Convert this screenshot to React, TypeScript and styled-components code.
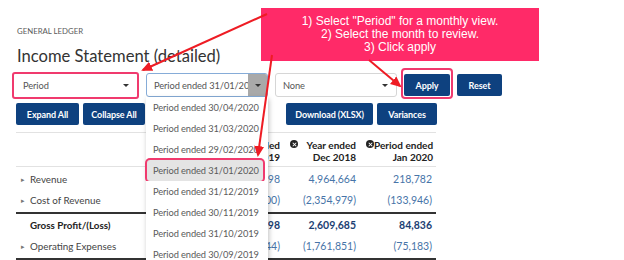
import styled, { createGlobalStyle } from 'styled-components'

const GlobalStyle = createGlobalStyle`
  * { box-sizing: border-box; }
  body {
    margin: 0;
    background: #fff;
    font-family: Lato, "Noto Sans", sans-serif;
  }
`

const periods = [
  '30/04/2020',
  '31/03/2020',
  '29/02/2020',
  '31/01/2020',
  '31/12/2019',
  '30/11/2019',
  '31/10/2019',
  '30/09/2019',
]

const rows = [
  { label: 'Revenue', values: ['5,214,798', '4,964,664', '218,782'], expandable: true },
  { label: 'Cost of Revenue', values: ['(2,490,000)', '(2,354,979)', '(133,946)'], expandable: true, closing: true },
  { label: 'Gross Profit/(Loss)', values: ['2,724,798', '2,609,685', '84,836'], total: true },
  { label: 'Operating Expenses', values: ['(1,893,344)', '(1,761,851)', '(75,183)'], expandable: true, closing: true },
]

const App = () => {
  return (
    <Page>
      <GlobalStyle />
      <Eyebrow>GENERAL LEDGER</Eyebrow>
      <Title>Income Statement (detailed)</Title>

      <FilterRow>
        <Select $highlight>
          <span>Period</span>
          <Caret />
        </Select>
        <Select $focused>
          <span>Period ended 31/01/2020</span>
          <CaretBox>
            <Caret />
          </CaretBox>
        </Select>
        <Select>
          <span>None</span>
          <Caret />
        </Select>
        <Button $w={46} $highlight>Apply</Button>
        <Button $w={45}>Reset</Button>
      </FilterRow>

      <ActionRow>
        <Button $w={63}>Expand All</Button>
        <Button $w={62}>Collapse All</Button>
        <Spacer />
        <Button $w={87}>Download (XLSX)</Button>
        <Button $w={60}>Variances</Button>
      </ActionRow>

      <Table>
        <HeaderRow>
          <div />
          <HeadCell>
            <CloseIcon />
            <span>Year ended<br />Dec 2019</span>
          </HeadCell>
          <HeadCell>
            <CloseIcon />
            <span>Year ended<br />Dec 2018</span>
          </HeadCell>
          <HeadCell>
            <CloseIcon />
            <span>Period ended<br />Jan 2020</span>
          </HeadCell>
        </HeaderRow>
        {rows.map((row) => (
          <Row key={row.label} $closing={row.closing}>
            <Label $total={row.total}>
              <Toggle>{row.expandable ? '▸' : ''}</Toggle>
              {row.label}
            </Label>
            {row.values.map((v, i) => (
              <Value key={i} $total={row.total}>{v}</Value>
            ))}
          </Row>
        ))}
      </Table>

      <Menu>
        {periods.map((p) => (
          <MenuItem key={p} $active={p === '31/01/2020'}>
            Period ended {p}
          </MenuItem>
        ))}
      </Menu>

      <Callout>
        1) Select "Period" for a monthly view.<br />
        2) Select the month to review.<br />
        3) Click apply
      </Callout>

      <Arrows width="624" height="260" viewBox="0 0 624 260">
        <defs>
          <marker id="head" markerWidth="11" markerHeight="10" refX="9" refY="5" orient="auto" markerUnits="userSpaceOnUse">
            <path d="M0,0 L11,5 L0,10 z" fill="#ee1c24" />
          </marker>
        </defs>
        <line x1="267" y1="14" x2="143" y2="70" stroke="#ee1c24" strokeWidth="2" markerEnd="url(#head)" />
        <line x1="272" y1="55" x2="258" y2="155" stroke="#ee1c24" strokeWidth="2" markerEnd="url(#head)" />
        <line x1="369" y1="60" x2="400" y2="86" stroke="#ee1c24" strokeWidth="2" markerEnd="url(#head)" />
      </Arrows>
    </Page>
  )
}

const Page = styled.div`
  position: relative;
  width: 624px;
  height: 260px;
  overflow: hidden;
  padding: 26px 16px 0;
`

const Eyebrow = styled.div`
  height: 10px;
  font-size: 7.8px;
  line-height: 10px;
  color: #5a5a5a;
  padding-left: 1px;
`

const Title = styled.h1`
  margin: 10px 0 0 1px;
  height: 20px;
  font-size: 16.6px;
  line-height: 20px;
  font-weight: 400;
  color: #333;
`

const FilterRow = styled.div`
  display: flex;
  align-items: center;
  gap: 7px;
  margin-top: 7px;
`

const Select = styled.div<{ $highlight?: boolean; $focused?: boolean }>`
  position: relative;
  flex: none;
  display: flex;
  align-items: center;
  justify-content: space-between;
  width: ${(p) => (p.$highlight ? '127px' : '122px')};
  height: ${(p) => (p.$highlight ? '27px' : '24px')};
  margin: ${(p) => (p.$highlight ? '-1px 0 -2px -4px' : '0')};
  padding: 0 0 0 ${(p) => (p.$highlight ? '9px' : '7px')};
  background: #fff;
  border: ${(p) => (p.$highlight ? '2px solid #f03a6e' : p.$focused ? '1px solid #86acd8' : '1px solid #d6d6d6')};
  border-radius: 3px;
  font-size: 9.3px;
  letter-spacing: -0.1px;
  color: #555;
  white-space: nowrap;
  overflow: hidden;
  & > span {
    overflow: hidden;
  }
`

const Caret = styled.i`
  flex: none;
  width: 0;
  height: 0;
  margin: 0 8px;
  border-left: 3px solid transparent;
  border-right: 3px solid transparent;
  border-top: 3px solid #333;
`

const CaretBox = styled.div`
  flex: none;
  display: flex;
  align-items: center;
  justify-content: center;
  width: 19px;
  height: 100%;
  background: #a9a9a9;
  & > i {
    margin: 0;
  }
`

const Button = styled.button<{ $w: number; $highlight?: boolean }>`
  position: relative;
  flex: none;
  width: ${(p) => p.$w}px;
  height: 22px;
  padding: 0;
  background: #0e417f;
  color: #fff;
  border: none;
  border-radius: 2px;
  font-family: Lato, sans-serif;
  font-size: 9px;
  letter-spacing: -0.1px;
  font-weight: 700;
  &::after {
    content: '';
    display: ${(p) => (p.$highlight ? 'block' : 'none')};
    position: absolute;
    left: -3px;
    right: -3px;
    top: -6px;
    bottom: -3px;
    border: 2px solid #f03a6e;
    border-radius: 4px;
  }
`

const ActionRow = styled.div`
  display: flex;
  gap: 4px;
  margin-top: 6px;
`

const Spacer = styled.div`
  width: 133px;
`

const Table = styled.div`
  width: 420px;
  margin-top: 7px;
  border-top: 1px solid #e2e2e2;
`

const grid = `
  display: grid;
  grid-template-columns: 188px 76px 76px 76px;
`

const HeaderRow = styled.div`
  ${grid}
  height: 34px;
  padding-top: 6px;
  border-bottom: 1px solid #e2e2e2;
`

const HeadCell = styled.div`
  display: flex;
  justify-content: space-between;
  align-items: flex-start;
  padding-left: 10px;
  font-size: 10px;
  font-weight: 700;
  color: #222;
  line-height: 12px;
  text-align: right;
  white-space: nowrap;
`

const CloseIcon = styled.span`
  position: relative;
  flex: none;
  width: 8px;
  height: 8px;
  border-radius: 50%;
  background: #222;
  margin-top: 1px;
  &::before,
  &::after {
    content: '';
    position: absolute;
    left: 1.5px;
    top: 3.5px;
    width: 5px;
    height: 1px;
    background: #fff;
    transform: rotate(45deg);
  }
  &::after {
    transform: rotate(-45deg);
  }
`

const Row = styled.div<{ $closing?: boolean }>`
  ${grid}
  height: ${(p) => (p.$closing ? '24px' : '22px')};
  padding-bottom: ${(p) => (p.$closing ? '2px' : '0')};
  align-items: center;
  border-bottom: ${(p) => (p.$closing ? '2px solid #333' : 'none')};
  &:nth-of-type(2) {
    margin-top: 1px;
  }
`

const Label = styled.div<{ $total?: boolean }>`
  display: flex;
  align-items: center;
  font-size: 9.8px;
  font-weight: ${(p) => (p.$total ? 700 : 400)};
  color: ${(p) => (p.$total ? '#222' : '#444')};
`

const Toggle = styled.span`
  width: 14px;
  padding-left: 5px;
  font-size: 7px;
  color: #777;
`

const Value = styled.div<{ $total?: boolean }>`
  text-align: right;
  font-size: 10.5px;
  font-weight: ${(p) => (p.$total ? 700 : 400)};
  color: ${(p) => (p.$total ? '#1c3f73' : '#4774a8')};
`

const Menu = styled.div`
  position: absolute;
  left: 146px;
  top: 97px;
  width: 122px;
  background: #fff;
  box-shadow: 1px 2px 5px rgba(0, 0, 0, 0.25);
`

const MenuItem = styled.div<{ $active?: boolean }>`
  height: 21px;
  margin: ${(p) => (p.$active ? '0 5px 0 1px' : '0')};
  padding-left: ${(p) => (p.$active ? '6px' : '7px')};
  display: flex;
  align-items: center;
  font-size: 9.3px;
  letter-spacing: -0.1px;
  color: #5a5a5a;
  white-space: nowrap;
  background: ${(p) => (p.$active ? '#e4e4e4' : '#fff')};
  border-radius: ${(p) => (p.$active ? '3px' : '0')};
  box-shadow: ${(p) => (p.$active ? '0 0 0 2px #f03a6e' : 'none')};
`

const Callout = styled.div`
  position: absolute;
  left: 261px;
  top: 8px;
  width: 278px;
  height: 53px;
  padding-top: 7px;
  background: #ff2a68;
  color: #fff;
  font-family: "Liberation Sans", Arial, sans-serif;
  font-size: 12px;
  line-height: 13px;
  text-align: center;
`

const Arrows = styled.svg`
  position: absolute;
  left: 0;
  top: 0;
  pointer-events: none;
`

export default App
